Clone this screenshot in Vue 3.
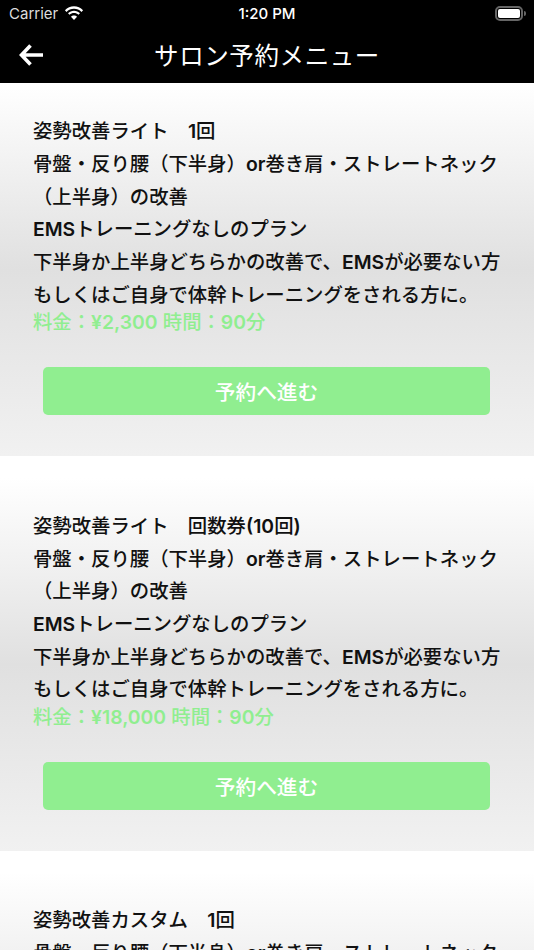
<script setup>
const desc = [
  '骨盤・反り腰（下半身）or巻き肩・ストレートネック',
  '（上半身）の改善',
  'EMSトレーニングなしのプラン',
  '下半身か上半身どちらかの改善で、EMSが必要ない方',
  'もしくはご自身で体幹トレーニングをされる方に。'
]
const plans = [
  { title: '姿勢改善ライト　1回', price: '料金：¥2,300 時間：90分' },
  { title: '姿勢改善ライト　回数券(10回)', price: '料金：¥18,000 時間：90分' },
  { title: '姿勢改善カスタム　1回', price: '料金：¥3,300 時間：90分' }
]
const split = (s) => s.split(/([A-Za-z0-9¥,().]+)/).filter(Boolean).map((t) => ({
  t,
  latin: /^[A-Za-z0-9¥,().]+$/.test(t)
}))
</script>

<template>
  <div class="screen">
    <header class="top">
      <div class="status">
        <div class="carrier">
          <span>Carrier</span>
          <svg class="wifi" width="20" height="15" viewBox="0 0 21 15">
            <path d="M10.5 2.600c3 0 5.800 1.200 7.900 3.200l1.600-1.700C17.500 1.600 14.100 0 10.500 0S3.500 1.600 1 4.100l1.600 1.700c2.100-2 4.900-3.200 7.900-3.200z" fill="#fff"/>
            <path d="M10.500 7.100c1.800 0 3.400.7 4.700 1.800l1.600-1.700c-1.700-1.500-3.900-2.500-6.300-2.500s-4.600 1-6.300 2.500l1.600 1.700c1.300-1.100 2.900-1.800 4.700-1.800z" fill="#fff"/>
            <path d="M10.500 9.600c-1.300 0-2.400.5-3.200 1.200l3.200 3.500 3.200-3.500c-.8-.7-1.900-1.200-3.200-1.200z" fill="#fff"/>
          </svg>
        </div>
        <span class="time">1:20 PM</span>
        <div class="battery"><i class="level"></i><i class="nub"></i></div>
      </div>
      <div class="nav">
        <svg class="back" width="24" height="24" viewBox="0 0 24 24">
          <path d="M11.500 2.500 2.500 12l9 9.500M3 12h21" fill="none" stroke="#fff" stroke-width="3.600"/>
        </svg>
        <h1>サロン予約メニュー</h1>
      </div>
    </header>
    <main class="list">
      <section v-for="p in plans" :key="p.title" class="card">
        <div class="line"><span v-for="(s, i) in split(p.title)" :key="i" :class="{ latin: s.latin }">{{ s.t }}</span></div>
        <div v-for="d in desc" :key="d" class="line"><span v-for="(s, i) in split(d)" :key="i" :class="{ latin: s.latin }">{{ s.t }}</span></div>
        <div class="price"><span v-for="(s, i) in split(p.price)" :key="i" :class="{ latin: s.latin }">{{ s.t }}</span></div>
        <button class="cta">予約へ進む</button>
      </section>
    </main>
  </div>
</template>

<style>
html, body { margin: 0; background: #fff; }
</style>

<style scoped>
.screen {
  width: 534px;
  height: 950px;
  overflow: hidden;
  background: #fff;
  font-family: Inter, "Noto Sans CJK JP", sans-serif;
}
.top { background: #000; height: 83px; color: #fff; }
.status {
  height: 27px;
  display: flex;
  align-items: center;
  justify-content: space-between;
  padding: 0 9px;
  position: relative;
  font-size: 15px;
}
.carrier { display: flex; align-items: center; gap: 6px; color: #ddd; }
.wifi { margin-top: -1px; }
.time {
  position: absolute;
  left: 0;
  right: 0;
  text-align: center;
  font-weight: 500;
}
.battery {
  position: relative;
  width: 28px;
  height: 15px;
  border: 2px solid #666;
  border-radius: 5px;
  padding: 1px;
  box-sizing: border-box;
  margin-right: 2px;
  display: flex;
}
.level { flex: 1; background: #fff; border-radius: 2px; }
.nub {
  position: absolute;
  right: -5px;
  top: 3px;
  width: 2px;
  height: 5px;
  background: #666;
  border-radius: 0 2px 2px 0;
}
.nav {
  height: 56px;
  display: flex;
  align-items: center;
  justify-content: center;
  position: relative;
}
.back { position: absolute; left: 19px; top: 16px; }
h1 {
  margin: 0 0 2px;
  font-size: 24.500px;
  font-weight: 400;
  letter-spacing: 0.6px;
}
.card {
  height: 373px;
  margin-bottom: 21.500px;
  box-sizing: border-box;
  padding: 32.400px 33px 0;
  background: linear-gradient(#fff 0%, #e0e0e0 50%, #f1f1f1 100%);
}
.line {
  font-size: 19.360px;
  line-height: 32.700px;
  height: 32.700px;
  font-weight: 500;
  color: #111;
  white-space: nowrap;
}
.latin { font-weight: 600; }
.price {
  font-size: 19.360px;
  line-height: 27px;
  height: 27px;
  margin-top: -2.500px;
  font-weight: 500;
  color: #90ee90;
  white-space: nowrap;
}
.cta {
  display: block;
  width: 447px;
  height: 48px;
  margin: 31px 0 0 10px;
  border: 0;
  border-radius: 5px;
  background: #90ee90;
  color: #fff;
  font-family: inherit;
  font-size: 20.700px;
  font-weight: 500;
}
</style>
